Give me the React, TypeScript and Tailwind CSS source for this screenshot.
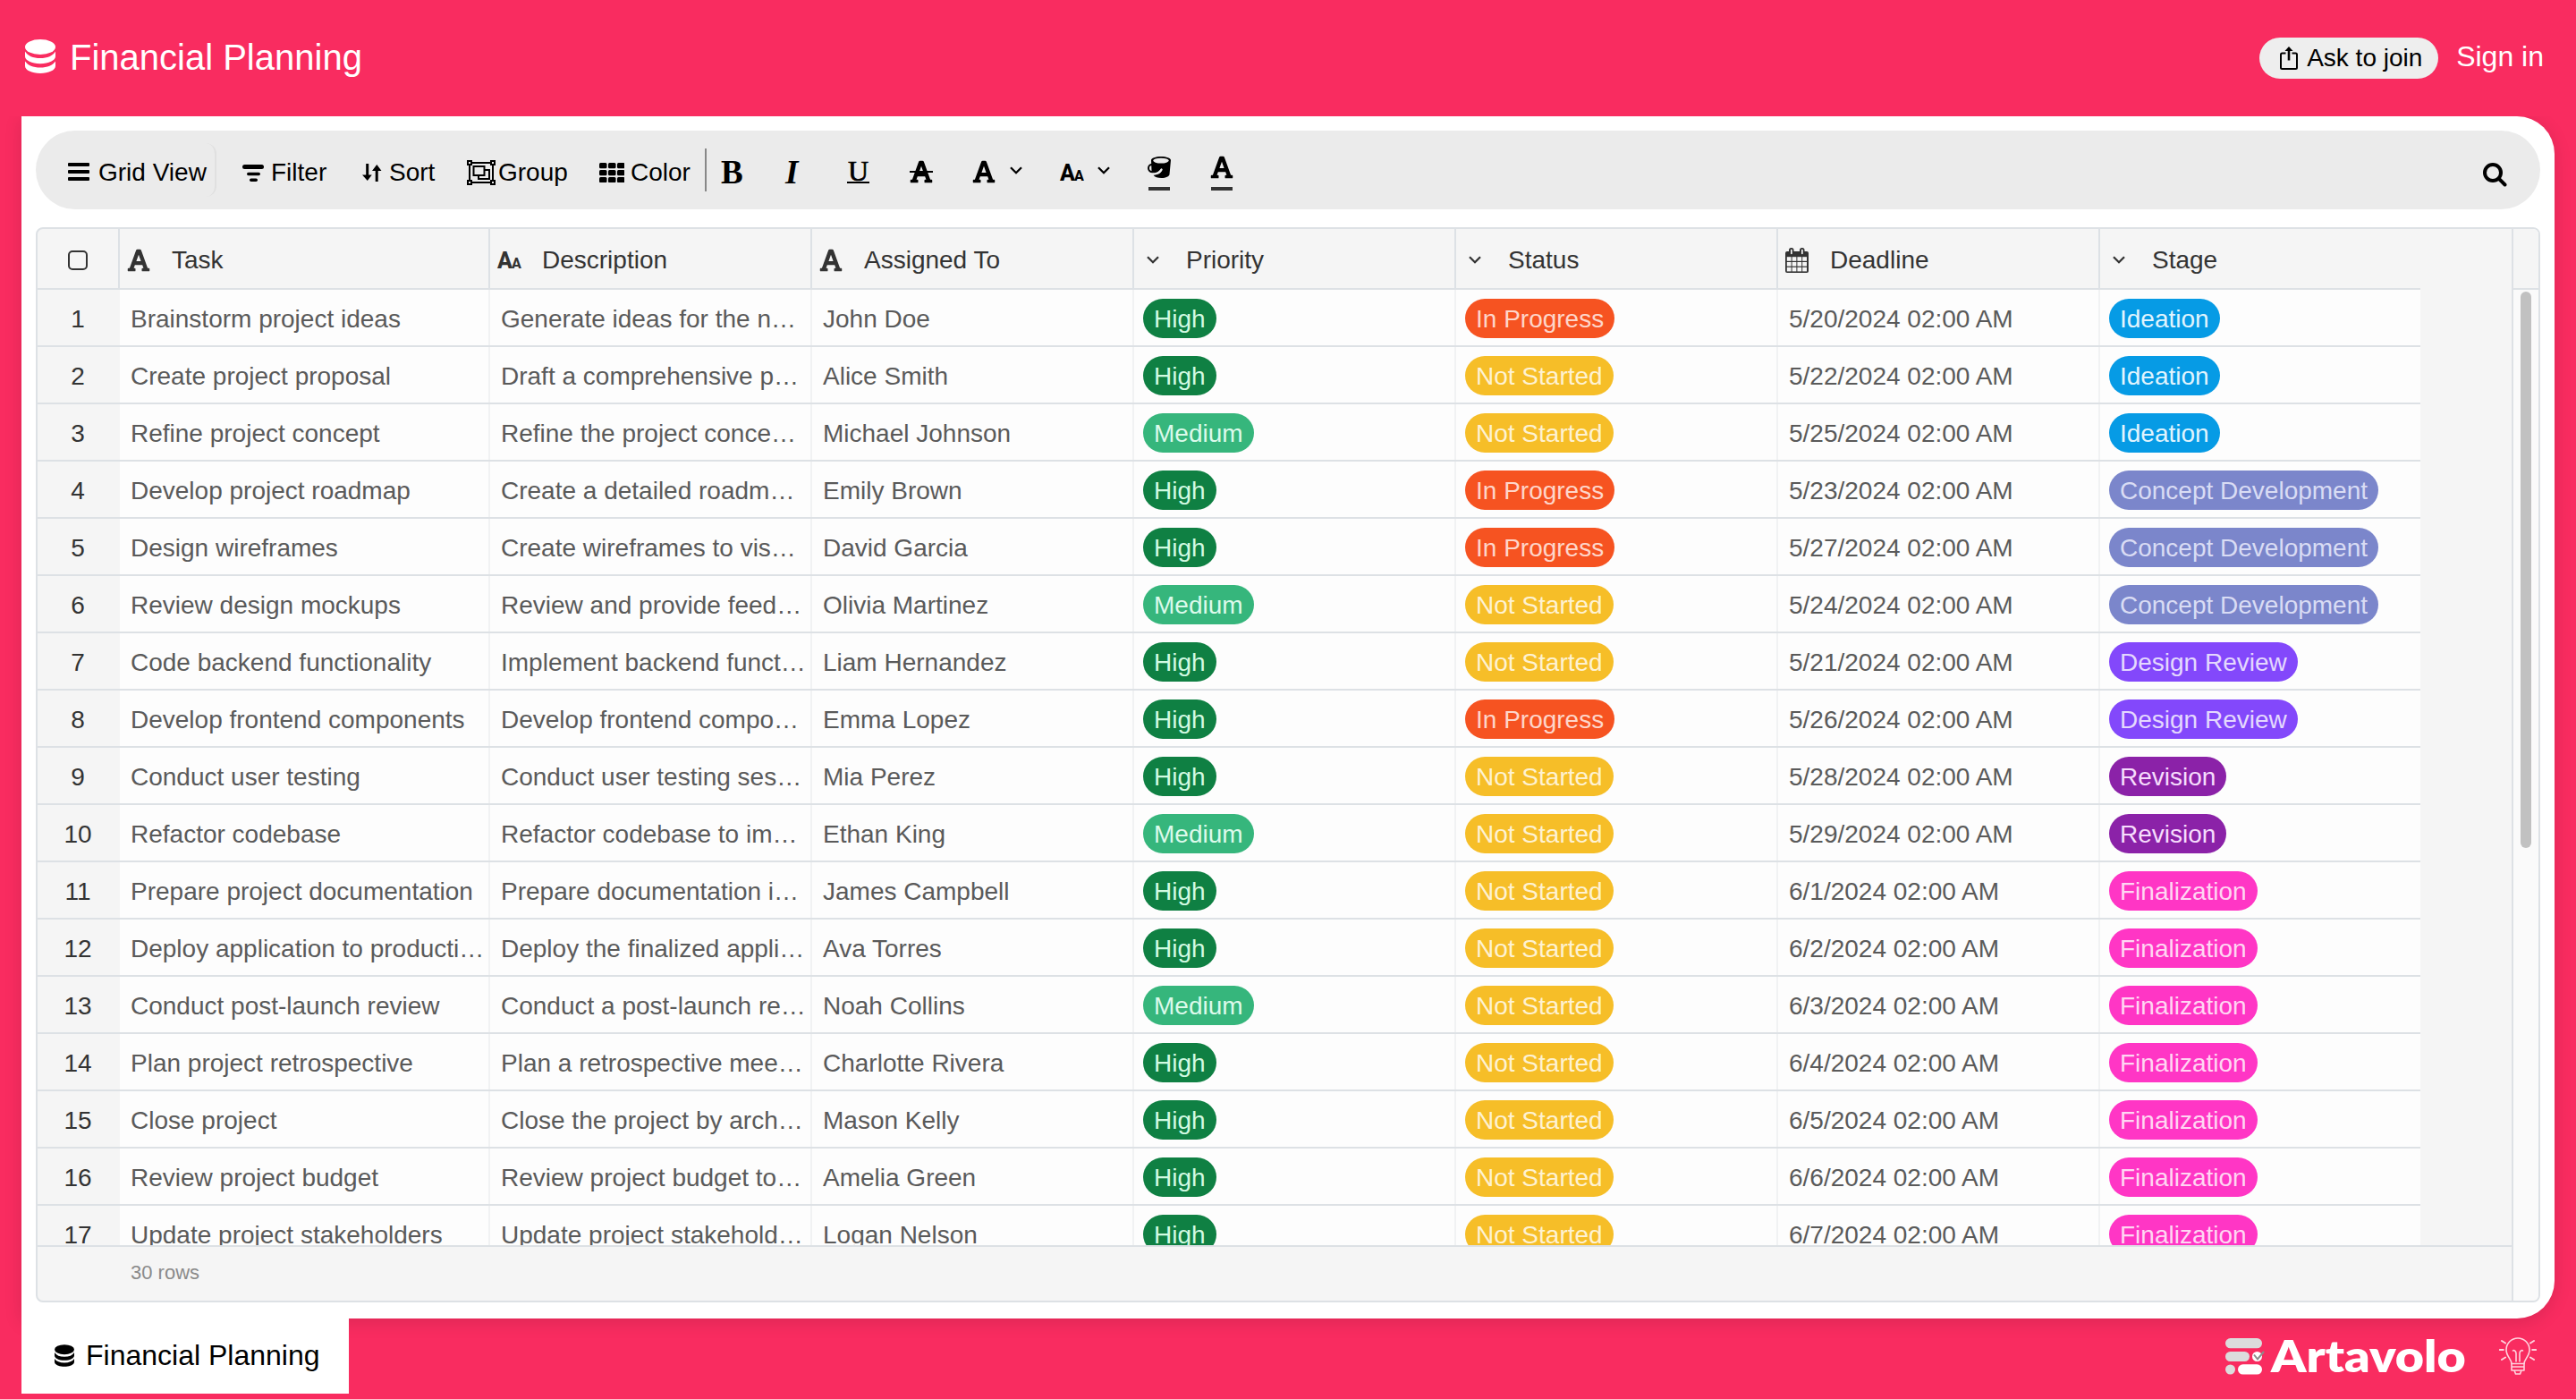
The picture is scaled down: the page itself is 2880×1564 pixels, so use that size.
import React from 'react';
import { FaFont } from 'react-icons/fa';

const DatabaseIcon = ({ className }: { className: string }) => (
  <svg viewBox="0 0 34 38" className={className} fill="currentColor">
    <ellipse cx="17" cy="8.5" rx="17" ry="8.5" />
    <path d="M0 13.5C3 18.5 9 21 17 21s14-2.500 17-7.500V19c0 4.500-7.500 8.200-17 8.200S0 23.500 0 19z" />
    <path d="M0 24.500C3 29 9 31.500 17 31.500s14-2.500 17-7V29.800C34 34.500 26.500 38 17 38S0 34.500 0 29.800z" />
  </svg>
);

const MenuIcon = () => (
  <svg viewBox="0 0 24 20" className="h-5 w-6" fill="currentColor">
    <rect width="24" height="4" rx="1" />
    <rect y="8" width="24" height="4" rx="1" />
    <rect y="16" width="24" height="4" rx="1" />
  </svg>
);

const FilterIcon = () => (
  <svg viewBox="0 0 24 19" className="h-[19px] w-6" fill="currentColor">
    <rect width="24" height="5" rx="2.500" />
    <rect x="5" y="8.800" width="15" height="3.500" rx="1.700" />
    <rect x="8" y="15.500" width="9" height="3.500" rx="1.700" />
  </svg>
);

const SortIcon = () => (
  <svg viewBox="0 0 22 20" className="h-5 w-[22px]" fill="currentColor">
    <path d="M4.200 0h3v12.500h3.600L5.800 19 0 12.500h4.200z" />
    <path d="M14.700 20h3V8h3.800L16.300 1 11 8h3.700z" />
  </svg>
);

const GroupIcon = () => (
  <svg viewBox="0 0 32 28" className="h-7 w-8" fill="none" stroke="currentColor" strokeWidth="2">
    <path d="M6 3h20M6 25h20M3 6v16M29 6v16" />
    <rect x="1" y="1" width="4" height="4" />
    <rect x="27" y="1" width="4" height="4" />
    <rect x="1" y="23" width="4" height="4" />
    <rect x="27" y="23" width="4" height="4" />
    <rect x="7.500" y="7" width="12" height="10" />
    <path d="M20 11h5v10H13v-3.500" />
  </svg>
);

const GridIcon = () => (
  <svg viewBox="0 0 28 22" className="h-[22px] w-7" fill="currentColor">
    {[0, 10, 20].map((x) =>
      [0, 8, 16].map((y) => <rect key={`${x}-${y}`} x={x} y={y} width="8.500" height="6.200" rx="1.500" />)
    )}
  </svg>
);

const Chevron = () => (
  <svg viewBox="0 0 14 9" className="h-[9px] w-[14px]" fill="none" stroke="currentColor" strokeWidth="2.300">
    <path d="M1 1.200l6 6 6-6" />
  </svg>
);

const LetterSizes = () => (
  <span className="flex items-baseline font-['Roboto'] leading-none font-extrabold">
    <span className="text-[25px] leading-none">A</span>
    <span className="-ml-px text-[16px] leading-none">A</span>
  </span>
);

const BucketIcon = () => (
  <svg viewBox="0 0 26 24" className="h-6 w-[26px]">
    <path d="M4 4c0-2.300 5-4 11-4s11 1.700 11 4l-1.500 16c-.3 2.300-4 4-9 4-4 0-7.500-1-9-3.200 5-.3 8.500-2.300 9.800-5.300.5-1.200-.7-2-1.700-1-1.500 2.200-4 4-7.600 4.200L4.500 16z" fill="currentColor" />
    <ellipse cx="15" cy="4.600" rx="8.800" ry="2.900" fill="#ebebeb" />
    <path d="M6 9C2.500 8.500 1 10.500 1 13s2 4.700 5.500 4.200" fill="none" stroke="currentColor" strokeWidth="2" />
    <path d="M6.500 19.500c5-.3 7.500-2.500 9-5" fill="none" stroke="#ebebeb" strokeWidth="2.200" strokeLinecap="round" />
  </svg>
);

const CalendarIcon = () => (
  <svg viewBox="0 0 26 28" className="h-7 w-[26px]">
    <rect y="4" width="26" height="24" rx="2" fill="currentColor" />
    <rect x="4" width="5.500" height="9" rx="2.500" fill="currentColor" />
    <rect x="16" width="5.500" height="9" rx="2.500" fill="currentColor" />
    <rect x="6" y="1.800" width="1.700" height="5.500" rx=".8" fill="#f5f5f5" />
    <rect x="18" y="1.800" width="1.700" height="5.500" rx=".8" fill="#f5f5f5" />
    {[1.8, 7.6, 13.4, 19.2].map((x) =>
      [10.2, 16, 21.800].map((y) => <rect key={`${x}-${y}`} x={x} y={y} width="4.800" height="4.600" fill="#f5f5f5" />)
    )}
  </svg>
);

const ShareIcon = () => (
  <svg viewBox="0 0 20 26" className="h-[26px] w-5" fill="none" stroke="currentColor" strokeWidth="2">
    <path d="M6.500 7.500H2.500Q1 7.500 1 9v14.500Q1 25 2.500 25h15Q19 25 19 23.500V9q0-1.500-1.500-1.500h-4" />
    <path d="M10 3v12.500" strokeWidth="2.600" />
    <path d="M10 0l4.500 5h-9z" fill="currentColor" stroke="none" />
  </svg>
);

const SearchIcon = () => (
  <svg viewBox="0 0 27 27" className="h-[27px] w-[27px]" fill="none" stroke="currentColor" strokeWidth="4" strokeLinecap="round">
    <circle cx="11" cy="11" r="9" />
    <path d="M18 18l6.500 6.500" />
  </svg>
);

const LogoMark = () => (
  <svg viewBox="0 0 44 41" className="h-[41px] w-11">
    <rect width="41" height="11.300" rx="5.600" fill="#dcdcdc" />
    <rect y="15" width="27" height="11" rx="5.500" fill="#dcdcdc" />
    <circle cx="35.500" cy="20.500" r="5.500" fill="#fff" />
    <path d="M32 18.500l4 5 7-8.500" fill="none" stroke="#8c8c8c" strokeWidth="2" />
    <circle cx="5.500" cy="35" r="5.500" fill="#dcdcdc" />
    <rect x="14" y="29.300" width="27" height="11.300" rx="5.600" fill="#fff" />
  </svg>
);

const BulbIcon = () => (
  <svg viewBox="0 0 42 42" className="h-[42px] w-[42px]" fill="none" stroke="#ffd3de" strokeWidth="1.600" strokeLinecap="round">
    <path d="M14 29.500c0-5-6-8-6-15.500a13 13 0 0 1 26 0c0 7.500-6 10.500-6 15.500z" />
    <path d="M19 27V18c0-3-3-4-3.500-3M23 27V18c0-3 3-4 3.500-3M14 33h14M14 37h14M14 29.500V37M28 29.500V37M17 37l1.500 4h5l1.500-4" />
    <path d="M0.800 14h4M37.200 14h4M3 4l4 2.500M39 4l-4 2.500M3 25l4-2.500M39 25l-4-2.500" strokeWidth="2" />
  </svg>
);

type Tag = { label: string; className: string };
const HIGH: Tag = { label: 'High', className: 'bg-[#0f8043] text-[#d2fae2]' };
const MEDIUM: Tag = { label: 'Medium', className: 'bg-[#36b67c] text-[#dcfaeb]' };
const PROGRESS: Tag = { label: 'In Progress', className: 'bg-[#f65321] text-[#fed6ca]' };
const NOT: Tag = { label: 'Not Started', className: 'bg-[#f6be28] text-[#fef2d2]' };
const IDEATION: Tag = { label: 'Ideation', className: 'bg-[#069be5] text-[#e0f4fe]' };
const CONCEPT: Tag = { label: 'Concept Development', className: 'bg-[#7b86cb] text-[#d9dcf4]' };
const DESIGN: Tag = { label: 'Design Review', className: 'bg-[#8348fb] text-[#e4d8fe]' };
const REVISION: Tag = { label: 'Revision', className: 'bg-[#8b22a8] text-[#f6dcfd]' };
const FINAL: Tag = { label: 'Finalization', className: 'bg-[#ff36c5] text-[#ffd6f3]' };

type Row = [string, string, string, Tag, Tag, string, Tag];
const rows: Row[] = [
  ['Brainstorm project ideas', 'Generate ideas for the n…', 'John Doe', HIGH, PROGRESS, '5/20/2024', IDEATION],
  ['Create project proposal', 'Draft a comprehensive p…', 'Alice Smith', HIGH, NOT, '5/22/2024', IDEATION],
  ['Refine project concept', 'Refine the project conce…', 'Michael Johnson', MEDIUM, NOT, '5/25/2024', IDEATION],
  ['Develop project roadmap', 'Create a detailed roadm…', 'Emily Brown', HIGH, PROGRESS, '5/23/2024', CONCEPT],
  ['Design wireframes', 'Create wireframes to vis…', 'David Garcia', HIGH, PROGRESS, '5/27/2024', CONCEPT],
  ['Review design mockups', 'Review and provide feed…', 'Olivia Martinez', MEDIUM, NOT, '5/24/2024', CONCEPT],
  ['Code backend functionality', 'Implement backend funct…', 'Liam Hernandez', HIGH, NOT, '5/21/2024', DESIGN],
  ['Develop frontend components', 'Develop frontend compo…', 'Emma Lopez', HIGH, PROGRESS, '5/26/2024', DESIGN],
  ['Conduct user testing', 'Conduct user testing ses…', 'Mia Perez', HIGH, NOT, '5/28/2024', REVISION],
  ['Refactor codebase', 'Refactor codebase to im…', 'Ethan King', MEDIUM, NOT, '5/29/2024', REVISION],
  ['Prepare project documentation', 'Prepare documentation i…', 'James Campbell', HIGH, NOT, '6/1/2024', FINAL],
  ['Deploy application to producti…', 'Deploy the finalized appli…', 'Ava Torres', HIGH, NOT, '6/2/2024', FINAL],
  ['Conduct post-launch review', 'Conduct a post-launch re…', 'Noah Collins', MEDIUM, NOT, '6/3/2024', FINAL],
  ['Plan project retrospective', 'Plan a retrospective mee…', 'Charlotte Rivera', HIGH, NOT, '6/4/2024', FINAL],
  ['Close project', 'Close the project by arch…', 'Mason Kelly', HIGH, NOT, '6/5/2024', FINAL],
  ['Review project budget', 'Review project budget to…', 'Amelia Green', HIGH, NOT, '6/6/2024', FINAL],
  ['Update project stakeholders', 'Update project stakehold…', 'Logan Nelson', HIGH, NOT, '6/7/2024', FINAL],
];

const COLS = 'grid grid-cols-[92px_414px_360px_360px_360px_360px_360px_358px]';

const LetterA = () => <FaFont className="h-[28px] w-[26px]" />;

const headers: [string, React.ReactNode][] = [
  ['Task', <LetterA />],
  ['Description', <LetterSizes />],
  ['Assigned To', <LetterA />],
  ['Priority', <Chevron />],
  ['Status', <Chevron />],
  ['Deadline', <CalendarIcon />],
  ['Stage', <Chevron />],
];

const Pill = ({ tag }: { tag: Tag }) => (
  <span className={`ml-2.5 flex h-11 items-center rounded-[22px] px-3 pt-px ${tag.className}`}>{tag.label}</span>
);

const Cell = ({ children, last }: { children: React.ReactNode; last?: boolean }) => (
  <div className={`flex min-w-0 items-center pt-0.5 ${last ? '' : 'border-r-2 border-[#f1f2f3]'}`}>{children}</div>
);

const TextCell = ({ text }: { text: string }) => (
  <Cell>
    <span className="pt-px pl-3">{text}</span>
  </Cell>
);

const Toolbar = () => (
  <div className="flex h-[88px] items-center rounded-[44px] bg-[#ebebeb] text-[28px] leading-none whitespace-nowrap text-black">
    <div className="flex h-[60px] w-[202px] items-center rounded-r-xl border-r-2 border-[#e0e0e0] pl-9">
      <span className="pt-1"><MenuIcon /></span>
      <span className="ml-2.5 pt-1.5">Grid View</span>
    </div>
    <div className="ml-[29px] flex w-[134px] items-center pt-1.5">
      <FilterIcon />
      <span className="ml-2">Filter</span>
    </div>
    <div className="flex w-[117px] items-center pt-1.5">
      <SortIcon />
      <span className="ml-2">Sort</span>
    </div>
    <div className="flex w-[148px] items-center pt-1.5">
      <GroupIcon />
      <span className="ml-[3px]">Group</span>
    </div>
    <div className="flex w-[118px] items-center pt-1.5">
      <GridIcon />
      <span className="ml-[7px]">Color</span>
    </div>
    <div className="h-12 w-0.5 bg-[#888]" />
    <div className="flex w-[88px] pt-1 pl-4 font-['Liberation_Serif'] text-[37px] font-bold">B</div>
    <div className="flex w-[69px] pt-1 font-['Liberation_Serif'] text-[37px] font-bold italic">I</div>
    <div className="flex w-[70px] pt-1">
      <span className="flex h-[25px] w-[25px] items-center justify-center border-b-2 border-black font-['Liberation_Serif'] text-[32px] [-webkit-text-stroke:0.7px_black]">U</span>
    </div>
    <div className="flex w-[70px] pt-1">
      <span className="relative flex">
        <LetterA />
        <span className="absolute inset-x-0 top-[13px] h-0.5 bg-black" />
      </span>
    </div>
    <div className="flex w-[98px] items-center pt-1">
      <LetterA />
      <span className="ml-4 flex pb-1"><Chevron /></span>
    </div>
    <div className="flex w-[98px] items-center">
      <span className="w-[42px] pt-1.5"><LetterSizes /></span>
      <span className="flex"><Chevron /></span>
    </div>
    <div className="flex w-[70px] flex-col pt-2">
      <BucketIcon />
      <span className="mt-2.5 ml-px h-1 w-6 bg-[#333]" />
    </div>
    <div className="flex flex-col pt-2">
      <span className="flex h-6 items-center"><LetterA /></span>
      <span className="mt-2.5 ml-px h-1 w-6 bg-[#333]" />
    </div>
    <div className="mr-[37px] ml-auto pt-2.5"><SearchIcon /></div>
  </div>
);

const DataGrid = () => (
  <div className="mt-5 flex h-[1202px] overflow-hidden rounded-lg border-2 border-[#dde1e5] bg-[#f5f5f5] text-[28px] leading-none whitespace-nowrap">
    <div className="flex w-[2768px] flex-col border-r-2 border-[#dde1e5]">
      <div className="h-[1136px] overflow-hidden">
        <div className={`${COLS} h-[68px] w-[2664px] border-b-2 border-[#dde1e5] text-[#333]`}>
          <div className="flex items-center border-r-2 border-[#dde1e5] pt-1 pl-[34px]">
            <span className="h-[22px] w-[22px] rounded-[5px] border-2 border-[#333]" />
          </div>
          {headers.map(([name, icon], i) => (
            <div key={name} className={`flex items-center pt-1 ${i < 6 ? 'border-r-2 border-[#dde1e5]' : ''}`}>
              <span className={`flex w-[58px] ${name === 'Priority' || name === 'Status' || name === 'Stage' ? 'pb-0.5 pl-3.5' : 'pl-2'}`}>{icon}</span>
              {name}
            </div>
          ))}
        </div>
        {rows.map((r, i) => (
          <div key={i} className={`${COLS} h-16 w-[2664px] border-b-2 border-[#dde1e5] bg-[#fdfdfd] text-[#5a5a5a]`}>
            <div className="flex items-center justify-center bg-[#f5f5f5] pt-[3px] pr-0.5 text-[#333]">{i + 1}</div>
            <TextCell text={r[0]} />
            <TextCell text={r[1]} />
            <TextCell text={r[2]} />
            <Cell><Pill tag={r[3]} /></Cell>
            <Cell><Pill tag={r[4]} /></Cell>
            <TextCell text={`${r[5]} 02:00 AM`} />
            <Cell last><Pill tag={r[6]} /></Cell>
          </div>
        ))}
      </div>
      <div className="flex flex-1 items-center border-t-2 border-[#dde1e5] pb-0.5 pl-[104px] text-[22px] text-[#8a8a8a]">30 rows</div>
    </div>
    <div className="flex flex-1 flex-col bg-[#fafafa]">
      <div className="h-[68px] border-b-2 border-[#dde1e5] bg-[#f5f5f5]" />
      <div className="mt-0.5 ml-2 h-[622px] w-3 rounded-full bg-[#c1c1c1]" />
    </div>
  </div>
);

export default function App() {
  return (
    <div className="flex h-[1564px] w-[2880px] flex-col overflow-hidden bg-[#f92c60] font-['Liberation_Sans',sans-serif]">
      <header className="relative z-10 flex h-[130px] items-center bg-[#f92c60] pr-9 pb-1 pl-7 text-white">
        <DatabaseIcon className="h-[38px] w-[34px]" />
        <h1 className="mt-0.5 ml-4 text-[40px] leading-none">Financial Planning</h1>
        <button className="mt-1 ml-auto flex h-[46px] w-[200px] items-center rounded-full bg-[#eee] pl-[23px] text-[28px] leading-none text-black">
          <ShareIcon />
          <span className="ml-2.5">Ask to join</span>
        </button>
        <a className="ml-5 text-[32px] leading-none">Sign in</a>
      </header>
      <main className="mx-6 h-[1344px] rounded-r-[42px] bg-white px-4 pt-4 shadow-[0_4px_20px_rgba(0,0,0,0.12)]">
        <Toolbar />
        <DataGrid />
      </main>
      <footer className="relative flex flex-1 pl-6">
        <div className="flex h-[84px] w-[366px] items-center bg-white pb-0.5 pl-[37px] text-black">
          <DatabaseIcon className="h-[25px] w-[22px]" />
          <span className="ml-[13px] text-[32px] leading-none">Financial Planning</span>
        </div>
        <div className="mr-11 ml-auto flex items-center pb-[6px] text-white">
          <LogoMark />
          <div className="ml-[7px] w-[255px] pb-0.5">
            <span className="inline-block origin-left scale-x-[1.11] font-['Lato'] text-[50px] leading-none font-extrabold">Artavolo</span>
          </div>
          <BulbIcon />
        </div>
      </footer>
    </div>
  );
}
